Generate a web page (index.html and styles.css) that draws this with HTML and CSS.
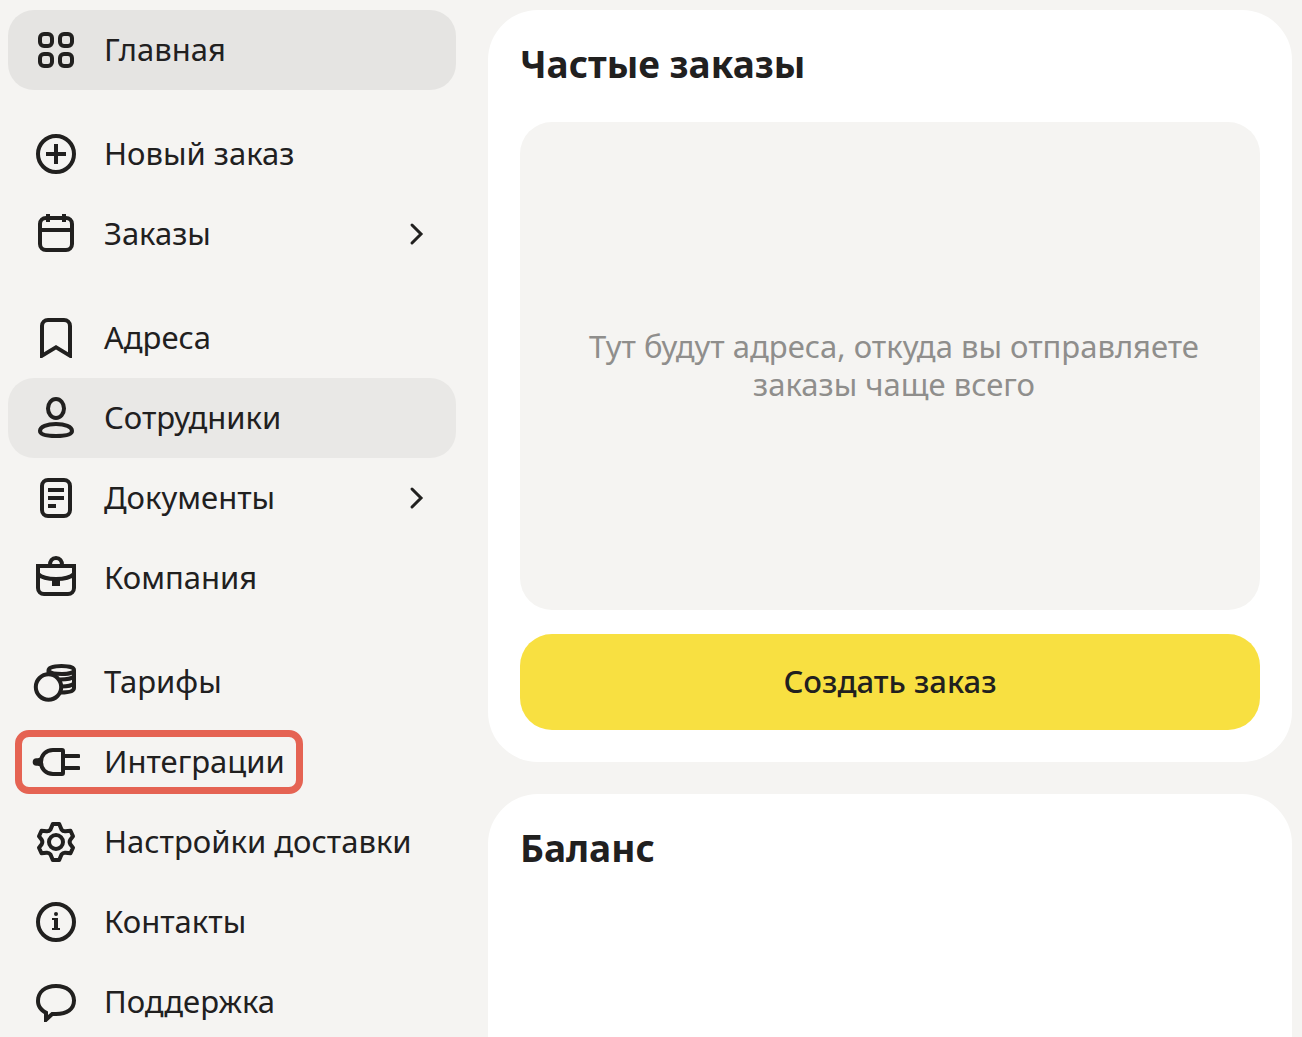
FILE: index.html
```html
<!DOCTYPE html>
<html lang="ru">
<head>
  <meta charset="utf-8">
  <meta name="viewport" content="width=device-width, initial-scale=1">
  <title>Главная</title>
  <link rel="stylesheet" href="styles.css">
</head>
<body>
  <div class="layout">
    <nav class="sidebar" aria-label="Меню">
      <div class="group">
        <a class="item item-active" href="#">
          <svg class="icon" viewBox="0 0 48 48"><rect x="8" y="8" width="12" height="12" rx="4"/><rect x="28" y="8" width="12" height="12" rx="4"/><rect x="8" y="28" width="12" height="12" rx="4"/><rect x="28" y="28" width="12" height="12" rx="4"/></svg>
          <span class="label">Главная</span>
        </a>
      </div>
      <div class="group">
        <a class="item" href="#">
          <svg class="icon" viewBox="0 0 48 48"><circle cx="24" cy="24" r="18"/><path d="M14 24h20M24 14v20"/></svg>
          <span class="label">Новый заказ</span>
        </a>
        <a class="item" href="#">
          <svg class="icon" viewBox="0 0 48 48"><rect x="8" y="8" width="32" height="32" rx="6"/><path d="M8 20h32M16 4v8M32 4v8"/></svg>
          <span class="label">Заказы</span>
          <svg class="chevron" viewBox="0 0 24 24"><path d="M4 3l9 9-9 9"/></svg>
        </a>
      </div>
      <div class="group">
        <a class="item" href="#">
          <svg class="icon" viewBox="0 0 48 48"><path class="solid" fill-rule="evenodd" d="M8 44V12a8 8 0 0 1 8-8h16a8 8 0 0 1 8 8v32h-2l-14-8.500-14 8.500H8zM12 38.300V12a4 4 0 0 1 4-4h16a4 4 0 0 1 4 4v26.300L24 31z"/></svg>
          <span class="label">Адреса</span>
        </a>
        <a class="item item-hover" href="#">
          <svg class="icon" viewBox="0 0 48 48"><ellipse cx="24" cy="14.500" rx="8" ry="9.500"/><path d="M24 30c9 0 16 2.500 16 7 0 3.600-6 5-16 5S8 40.600 8 37c0-4.500 7-7 16-7z"/></svg>
          <span class="label">Сотрудники</span>
        </a>
        <a class="item" href="#">
          <svg class="icon" viewBox="0 0 48 48"><rect x="10" y="6" width="28" height="36" rx="6"/><path d="M16 16h16M16 24h16M16 32h8"/></svg>
          <span class="label">Документы</span>
          <svg class="chevron" viewBox="0 0 24 24"><path d="M4 3l9 9-9 9"/></svg>
        </a>
        <a class="item" href="#">
          <svg class="icon" viewBox="0 0 48 48"><path d="M6 12h36v22a6 6 0 0 1-6 6H12a6 6 0 0 1-6-6zM18 11c0-4 2-7 6-7s6 3 6 7M6 20c4 4 10 5 18 5s14-1 18-5"/><path class="solid" d="M20 25h8v7h-8z"/></svg>
          <span class="label">Компания</span>
        </a>
      </div>
      <div class="group">
        <a class="item" href="#">
          <svg class="icon" viewBox="0 0 48 48"><circle cx="16.500" cy="29" r="12.700"/><path d="M16.500 15v-2.500C16.500 9.500 22 8 29.500 8S42 9.500 42 12v18c0 3-4 4.500-13 4.500M17 13c1 2 6 3 13 3s12-1.500 12-4M28 21.500c8 0 12-1 14-3M29.500 28.500c7 0 10.500-1 12.500-3"/></svg>
          <span class="label">Тарифы</span>
        </a>
        <a class="item item-marked" href="#">
          <svg class="icon" viewBox="0 0 48 48"><path d="M30 12H21c-7 0-12 5-12 12s5 12 12 12h9q1 0 1-1V13q0-1-1-1z"/><path d="M31 18h15.500M31 30h15.500" stroke-linecap="round"/><path class="solid" d="M9 19c-1.500 1-3 1.200-4.500 1.200a3.800 3.800 0 0 0 0 7.600c1.500 0 3 .2 4.500 1.200z"/></svg>
          <span class="label">Интеграции</span>
        </a>
        <a class="item" href="#">
          <svg class="icon" viewBox="0 0 48 48"><circle cx="24" cy="24" r="7"/><path stroke-linejoin="round" d="M20.800 6h6.400L29.500 11.500Q31 13.500 33.500 13.200L38.500 12.700 41 18.300 38.300 21.800Q37 24 38.300 26.200L41 29.700 38.500 35.300 33.500 34.800Q31 34.500 29.500 36.500L27.200 42h-6.400L18.500 36.500Q17 34.500 14.500 34.800L9.500 35.300 7 29.700 9.700 26.200Q11 24 9.700 21.800L7 18.300 9.500 12.700 14.500 13.200Q17 13.500 18.500 11.500z"/></svg>
          <span class="label">Настройки доставки</span>
        </a>
        <a class="item" href="#">
          <svg class="icon" viewBox="0 0 48 48"><circle cx="24" cy="24" r="18"/><circle class="solid" cx="24" cy="16" r="2"/><path class="solid" d="M20 20h6v10h2v2h-8v-2h2v-8h-2z"/></svg>
          <span class="label">Контакты</span>
        </a>
        <a class="item" href="#">
          <svg class="icon" viewBox="0 0 48 48"><path class="solid" fill-rule="evenodd" d="M24 6c12 0 20 6.500 20 16.500S36 38 24 38h-3l-6.500 6H12v-8C7 33 4 28.500 4 23 4 13 12 6 24 6zM24 10C14 10 8 15 8 23c0 4.500 3 8 8 10.500V37l3.500-3H24c10 0 16-4 16-11.500S34 10 24 10z"/></svg>
          <span class="label">Поддержка</span>
        </a>
      </div>
    </nav>
    <main class="content">
      <section class="card">
        <h2 class="title">Частые заказы</h2>
        <div class="placeholder">
          <p class="hint">Тут будут адреса, откуда вы отправляете заказы чаще всего</p>
        </div>
        <button class="create" type="button">Создать заказ</button>
      </section>
      <section class="card card-balance">
        <h2 class="title">Баланс</h2>
      </section>
    </main>
  </div>
</body>
</html>
```

FILE: styles.css
```css
*,
*::after {
  box-sizing: border-box;
}

body {
  margin: 0;
  background: #f5f4f2;
  color: #21201f;
  font-family: "Noto Sans", "Open Sans", sans-serif;
  font-size: 31px;
  line-height: 38px;
}

.layout {
  display: flex;
  gap: 32px;
  height: 100vh;
  padding: 10px 10px 0 8px;
  overflow: hidden;
}

.sidebar {
  display: flex;
  flex: 0 0 448px;
  flex-direction: column;
  gap: 24px;
}

.item {
  position: relative;
  display: flex;
  align-items: center;
  gap: 24px;
  height: 80px;
  padding: 0 24px;
  border-radius: 26px;
  color: inherit;
  text-decoration: none;
}

.item-active {
  background: #e5e4e2;
}

.item-hover {
  background: #e9e8e6;
}

.item-marked::after {
  content: "";
  position: absolute;
  top: 8px;
  left: 7px;
  width: 288px;
  height: 64px;
  border: 7px solid #e56353;
  border-radius: 14px;
}

.label {
  flex: 1;
  padding-bottom: 2px;
  white-space: nowrap;
}

.icon {
  flex: none;
  width: 48px;
  height: 48px;
  fill: none;
  stroke: #21201f;
  stroke-width: 4;
}

.icon .solid {
  fill: #21201f;
  stroke: none;
}

.chevron {
  flex: none;
  width: 24px;
  height: 24px;
  fill: none;
  stroke: #21201f;
  stroke-width: 3;
  stroke-linecap: round;
}

.content {
  display: flex;
  flex: 1;
  flex-direction: column;
  gap: 32px;
  min-width: 0;
}

.card {
  display: flex;
  flex-direction: column;
  padding: 32px;
  border-radius: 50px;
  background: #fff;
}

.card-balance {
  flex: 1;
  border-radius: 50px 50px 0 0;
}

.title {
  margin: 0 0 36px;
  font-size: 37px;
  font-weight: 700;
  line-height: 44px;
}

.placeholder {
  display: flex;
  align-items: center;
  justify-content: center;
  min-height: 488px;
  margin-bottom: 24px;
  padding: 0 56px 2px 64px;
  border-radius: 32px;
  background: #f5f4f2;
}

.hint {
  margin: 0;
  color: #8f8e8c;
  text-align: center;
}

.create {
  height: 96px;
  padding: 0 0 2px;
  border: 0;
  border-radius: 32px;
  background: #f8e041;
  color: inherit;
  font: inherit;
  font-weight: 500;
}
```
